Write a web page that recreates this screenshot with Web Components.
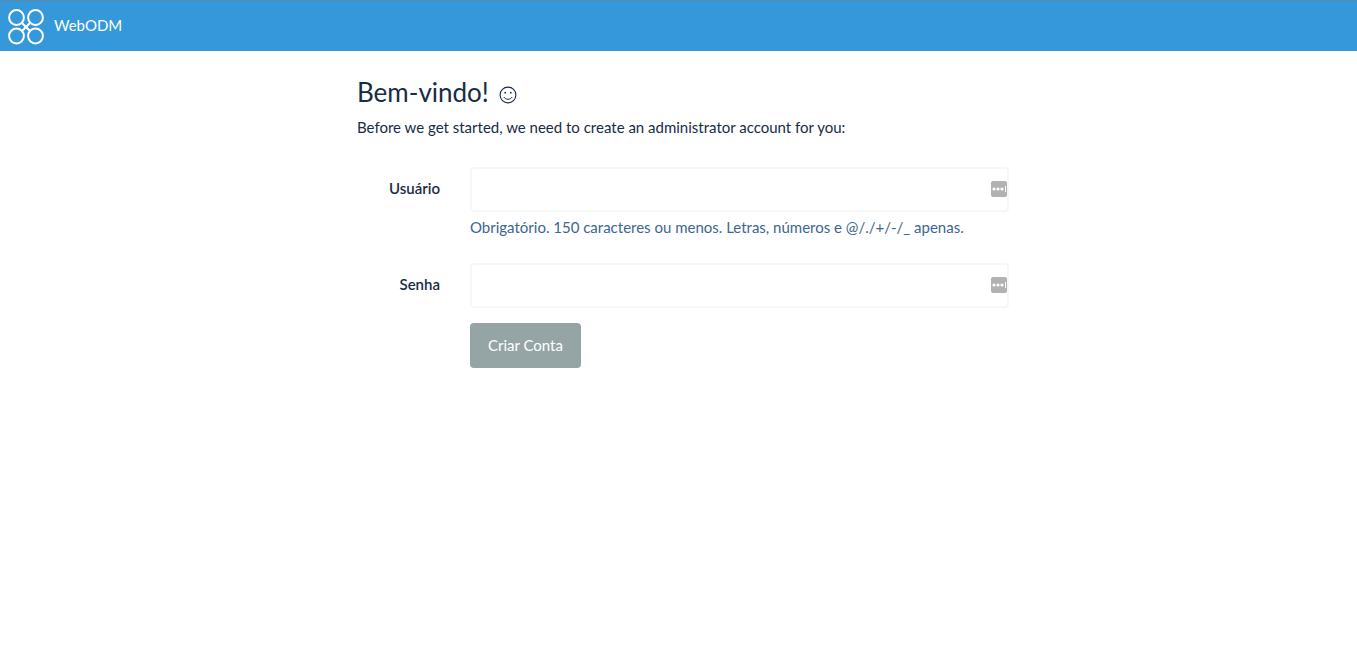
<!DOCTYPE html>
<html lang="pt-BR">
<head>
<meta charset="utf-8">
<meta name="viewport" content="width=device-width, initial-scale=1">
<title>WebODM</title>
<style>
body { margin: 0; background: #fff; color: #182c45; font: 15px/21px Lato, "Liberation Sans", sans-serif; }
</style>
</head>
<body>
<welcome-page></welcome-page>
<script>
const define = (name, html, connected) => {
  const template = document.createElement("template");
  template.innerHTML = html;
  customElements.define(name, class extends HTMLElement {
    constructor() {
      super();
      this.attachShadow({ mode: "open" }).append(template.content.cloneNode(true));
    }
    connectedCallback() {
      if (connected) connected(this, this.shadowRoot);
    }
  });
};

define("app-navbar", `
<style>
  :host { display: block; background: #3498db; border-top: 2px solid #4a90bd; color: #fff; }
  nav { display: flex; padding: 7px 8px 6px; }
  a { display: flex; align-items: flex-start; gap: 10px; color: inherit; text-decoration: none; }
  svg { display: block; }
  span { padding-top: 6px; }
</style>
<nav><a href="/">
  <svg width="36" height="36" viewBox="0 0 36 36" fill="none" stroke="#fff" stroke-width="2" aria-hidden="true">
    <circle cx="8.5" cy="8.5" r="7.4"/><circle cx="27.5" cy="8.5" r="7.4"/>
    <circle cx="8.5" cy="27" r="7.4"/><circle cx="27.5" cy="27" r="7.4"/>
    <path d="M13.5 13.5l9 9M22.5 13.5l-9 9"/><circle cx="18" cy="18" r="2" fill="#fff" stroke="none"/>
  </svg>
  <span><slot></slot></span>
</a></nav>`);

define("smile-icon", `
<style>:host { display: inline-block; } svg { display: block; }</style>
<svg width="18" height="18" viewBox="0 0 18 18" fill="none" stroke="#182c45" aria-hidden="true">
  <circle cx="9" cy="9" r="7.9" stroke-width="1.1"/>
  <path d="M4.8 11c1.8 3 6.6 3 8.4 0" stroke-width="1"/>
  <circle cx="6.2" cy="6.7" r="0.9" fill="#182c45" stroke="none"/>
  <circle cx="11.8" cy="6.7" r="0.9" fill="#182c45" stroke="none"/>
</svg>`);

define("account-field", `
<style>
  :host { display: grid; grid-template-columns: 83px minmax(0, 1fr); column-gap: 30px; }
  label { padding-top: 11px; text-align: right; font-weight: 600; }
  .box { display: flex; align-items: center; box-sizing: border-box; height: 45px; border: 2px solid #f6f7f7; border-radius: 4px; }
  input { flex: 1; min-width: 0; height: 100%; box-sizing: border-box; padding: 0 15px; border: 0; outline: 0; background: transparent; color: inherit; font: inherit; }
  svg { display: block; margin-bottom: 2px; }
  ::slotted([slot=help]) { display: block; margin-top: 5px; color: #3d6690; }
</style>
<label for="control"></label>
<div>
  <div class="box"><input id="control">
    <svg width="16" height="16" viewBox="0 0 16 16" fill="#fff" aria-hidden="true">
      <rect width="16" height="16" rx="2" fill="#b2b2b2"/>
      <circle cx="3" cy="8" r="1.6"/><circle cx="7" cy="8" r="1.6"/><circle cx="11" cy="8" r="1.6"/>
      <path d="M14 5h1v6h-1z"/>
    </svg>
  </div>
  <slot name="help"></slot>
</div>`, (host, root) => {
  root.querySelector("label").textContent = host.getAttribute("label");
  const input = root.querySelector("input");
  input.type = host.getAttribute("type") || "text";
  input.name = host.getAttribute("name");
});

define("primary-button", `
<style>
  :host { display: inline-block; }
  button { display: block; height: 45px; padding: 0 18px; border: 0; border-radius: 4px; background: #95a5a6; color: #fff; font: inherit; }
</style>
<button type="submit"><slot></slot></button>`);

define("welcome-page", `
<style>
  :host { display: block; }
  main { max-width: 652px; margin: 0 auto; padding: 24px 15px 0 24px; }
  h1 { display: flex; align-items: center; gap: 10px; margin: 0; font-size: 26px; line-height: 34px; font-weight: 400; }
  smile-icon { margin-top: 6px; }
  p { margin: 8px 0 29px; }
  account-field + account-field { margin-top: 25px; }
  .actions { display: grid; grid-template-columns: 83px minmax(0, 1fr); column-gap: 30px; margin-top: 15px; }
  primary-button { grid-column: 2; justify-self: start; }
</style>
<app-navbar>WebODM</app-navbar>
<main>
  <h1>Bem-vindo! <smile-icon></smile-icon></h1>
  <p>Before we get started, we need to create an administrator account for you:</p>
  <form>
    <account-field label="Usuário" name="username"><span slot="help">Obrigatório. 150 caracteres ou menos. Letras, números e @/./+/-/_ apenas.</span></account-field>
    <account-field label="Senha" name="password" type="password"></account-field>
    <div class="actions"><primary-button>Criar Conta</primary-button></div>
  </form>
</main>`);
</script>
</body>
</html>
